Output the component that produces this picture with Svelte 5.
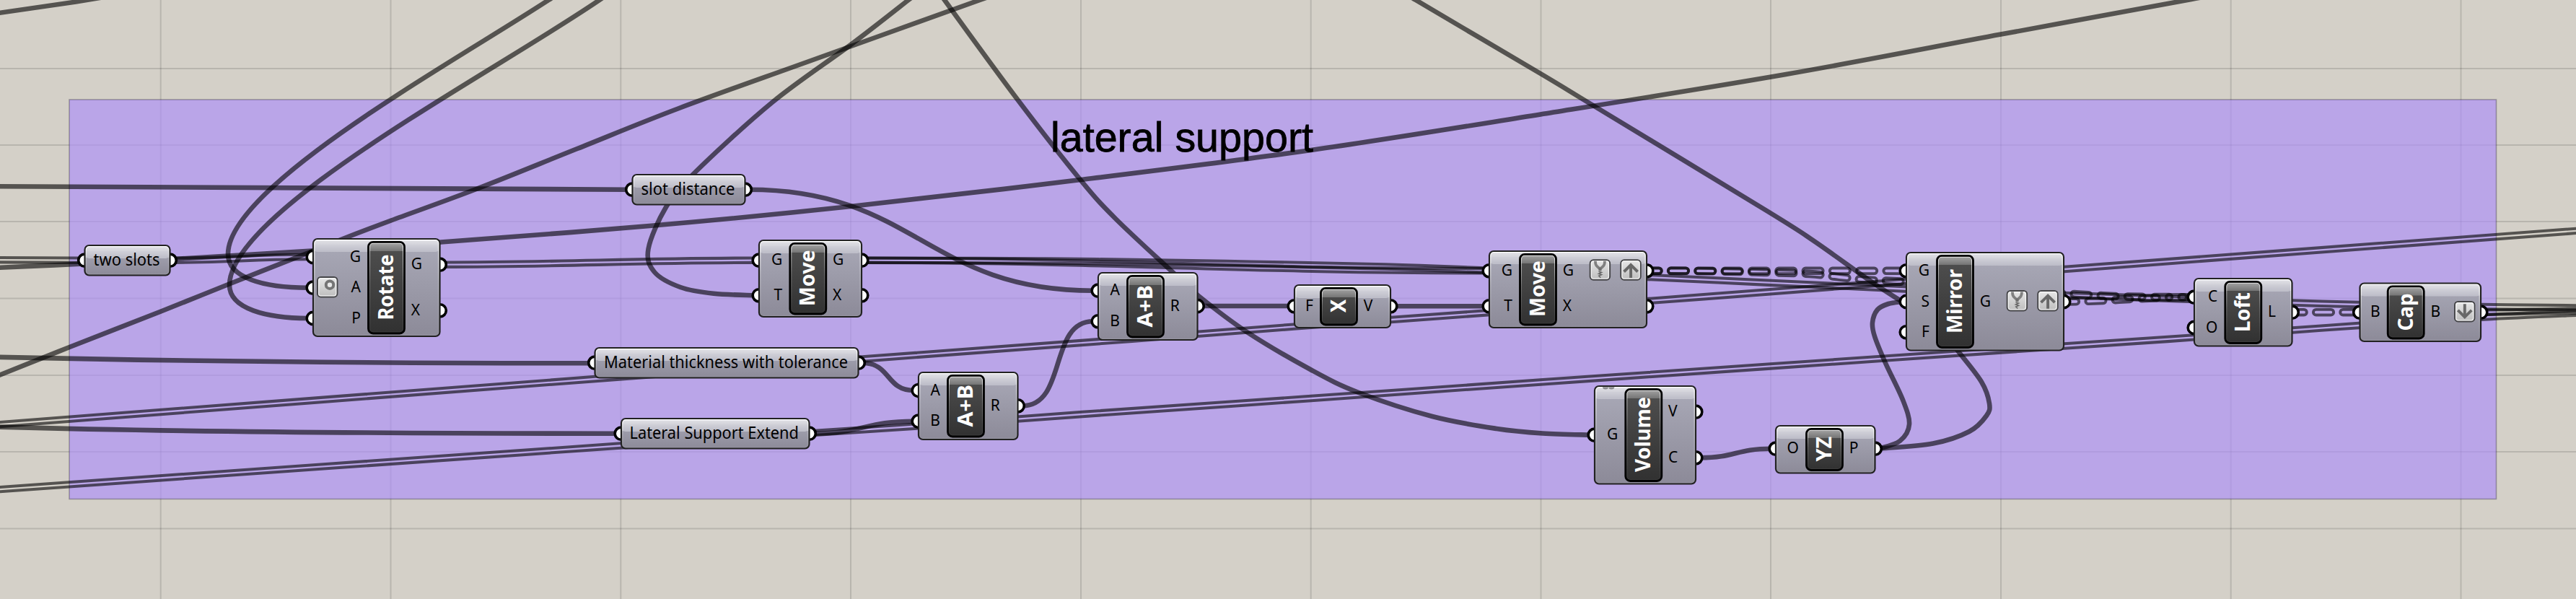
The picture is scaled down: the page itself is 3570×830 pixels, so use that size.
<script>
  const gridX = [222.7, 541.5, 860.3, 1179, 1498, 1816.7, 2135.5, 2454, 2773, 3091.7, 3410.5];
  const gridY = [95, 201, 307, 413.5, 520, 626, 732.5];

  // Smooth curve through a list of points (Catmull-Rom to cubic Bezier).
  function through(...p) {
    let d = `M${p[0][0]} ${p[0][1]}`;
    for (let i = 0; i < p.length - 1; i++) {
      const a = p[i - 1] ?? p[i], b = p[i], c = p[i + 1], e = p[i + 2] ?? c;
      d += `C${b[0] + (c[0] - a[0]) / 6} ${b[1] + (c[1] - a[1]) / 6} ${c[0] - (e[0] - b[0]) / 6} ${c[1] - (e[1] - b[1]) / 6} ${c[0]} ${c[1]}`;
    }
    return d;
  }
  // Wire leaving and arriving horizontally.
  const link = (x1, y1, x2, y2, k) => `M${x1} ${y1}C${x1 + k} ${y1} ${x2 - k} ${y2} ${x2} ${y2}`;

  const single = [
    'M-5 18.5L105 2.6L150 -5',
    'M-5 258.2C300 262 600 262.7 870 262.7',
    'M-5 494.8C250 500.5 560 503.3 820 503.3',
    'M-5 591.5C250 598.5 560 600.7 855 600.7',
    through([-5, 371], [116, 365.5], [250, 358.5], [432, 347.5], [611, 335.5], [900, 313], [1179, 286], [1498, 249], [1817, 208], [2135, 158.5], [2475, 103], [2773, 47.6], [3037, -1], [3080, -10]),
    through([-10, 524], [0, 519.5], [95, 481.5], [223, 431.5], [319, 393], [428, 350], [475, 331], [542, 305.5], [660, 262], [800, 206], [941, 150], [1121, 85], [1358, 0], [1400, -15]),
    'M768 -5C640 80 316 256 316 352C316 385 365 398.7 427 398.7',
    'M838 -5C700 92 318 290 318 395C318 428 370 441 427 441',
    through([1280, -17], [1259, 0], [1179, 62], [1070, 142], [961, 241], [923, 287], [898.5, 345], [907, 377], [943, 398], [989, 406.8], [1046, 409.3]),
    link(1038, 262.7, 1515, 402.7, 230),
    link(1196, 503, 1266, 541, 38),
    link(1128, 600.6, 1266, 583.7, 65),
    link(1417, 562.3, 1515, 445.3, 62),
    'M1665 424H1787',
    'M1933 424.3H2057',
    through([1296, -20], [1309, 0], [1411, 139], [1498, 250], [1546, 303], [1625, 377], [1661, 410], [1728, 460], [1817, 512.5], [1883, 544], [1985, 577], [2074, 594], [2138, 600.5], [2204, 602.7]),
    link(2356, 634.3, 2455, 621.7, 50),
    through([1940, -15], [1962, 0], [2135, 102], [2211, 148], [2450, 293], [2514, 334], [2593, 390], [2636, 418]),
    through([2604, 621.7], [2633, 611], [2646, 588], [2637, 554], [2613, 503], [2598, 466], [2595, 447], [2602, 429], [2617, 421], [2636, 418]),
    through([2604, 621.7], [2679, 614.5], [2729, 598], [2753, 576], [2757, 559], [2746, 529], [2714, 487], [2700, 470])
  ];

  const lists = [
    'M-5 360.2L110 360.7',
    link(240, 360.7, 428, 356, 90),
    link(614, 366.7, 1046, 360.7, 150),
    link(1198, 360.7, 2058, 375.3, 330),
    through([1196, 360.7], [1450, 361.5], [1700, 365], [1920, 369.5], [2058, 374.5], [2283, 384], [2450, 391.7], [2640, 400.5], [2861, 409], [3040, 415], [3177, 419.5], [3269, 422], [3439, 425], [3575, 426.5]),
    through([-5, 588.5], [825, 525], [1202, 497], [1522, 473.3], [1793, 452.6], [1928, 443], [2284, 417], [2450, 404.5], [2861, 373], [3575, 319.5]),
    through([-5, 678.5], [860, 617.5], [1271, 590.5], [1500, 574], [1817, 552], [2135, 529.5], [2450, 507.7], [2861, 479.5], [3041, 467.4], [3177, 457.5], [3269, 451], [3443, 439.5], [3575, 433.5]),
    link(3442, 432.7, 3575, 430.5, 50)
  ];

  const trees = [
    'M2278.5 375.3H2636',
    through([2278.5, 375.3], [2340, 375.3], [2430, 377], [2508, 379.5], [2549, 384], [2590, 388], [2640, 390.5], [2760, 400], [2861, 406.5], [2882, 408], [2930, 410.5], [2980, 411.5], [3036, 411.7]),
    'M2856.8 418C2920 418 2970 411.7 3036 411.7',
    'M3172.5 432.7H3264'
  ];

  const params = [
    { x: 116.5, y: 339, w: 120, text: 'two slots', tx: 129.5, tw: 92 },
    { x: 875.5, y: 241, w: 158, text: 'slot distance', tx: 888.5, tw: 130 },
    { x: 823.5, y: 481, w: 367, text: 'Material thickness with tolerance', tx: 837, tw: 338 },
    { x: 860, y: 579, w: 262.5, text: 'Lateral Support Extend', tx: 872.5, tw: 234.5 }
  ];

  const nodes = [
    { x: 433, y: 330, w: 177.5, h: 137, lx: 509, name: 'Rotate', t0: 443.5, tw: 91, ins: [['G', 356], ['A', 398.7], ['P', 441]], outs: [['G', 366.7], ['X', 430.3]], icons: [['dial', 439, 383]] },
    { x: 1051, y: 332, w: 144, h: 108, lx: 1093.3, name: 'Move', t0: 424.3, tw: 78, ins: [['G', 360.7], ['T', 409.3]], outs: [['G', 360.7], ['X', 409.3]] },
    { x: 1521, y: 377, w: 139.5, h: 95, lx: 1561, name: 'A+B', t0: 453.5, tw: 58.5, ins: [['A', 402.7], ['B', 445.3]], outs: [['R', 424]] },
    { x: 1272, y: 515, w: 139.5, h: 95, lx: 1312, name: 'A+B', t0: 591.5, tw: 58.5, ins: [['A', 541], ['B', 583.7]], outs: [['R', 562.3]] },
    { x: 1793, y: 394, w: 135, h: 61, lx: 1829, name: 'X', t0: 433, tw: 18, ins: [['F', 424.3]], outs: [['V', 424.3]] },
    { x: 2063, y: 347, w: 220, h: 108, lx: 2105, name: 'Move', t0: 439, tw: 78, ins: [['G', 375.3], ['T', 424.3]], outs: [['G', 375.3], ['X', 424.3]], icons: [['simplify', 2202.7, 359.3], ['up', 2245.3, 359.3]] },
    { x: 2209, y: 534, w: 142, h: 137.5, lx: 2251.3, name: 'Volume', t0: 654, tw: 104, ins: [['G', 602.7]], outs: [['V', 570.7], ['C', 634.3]] },
    { x: 2460, y: 589, w: 139.5, h: 67.5, lx: 2502, name: 'YZ', t0: 639.5, tw: 34.5, ins: [['O', 621.7]], outs: [['P', 621.7]] },
    { x: 2641, y: 349, w: 220, h: 137.5, lx: 2683, name: 'Mirror', t0: 462, tw: 89, ins: [['G', 375.3], ['S', 418], ['F', 460.3]], outs: [['G', 418]], icons: [['simplify', 2780.7, 402], ['up', 2823.3, 402]] },
    { x: 3040, y: 385, w: 137.5, h: 95.5, lx: 3082.3, name: 'Loft', t0: 460, tw: 55, ins: [['C', 411.7], ['O', 454]], outs: [['L', 432.7]] },
    { x: 3269.5, y: 391.5, w: 169.5, h: 82.5, lx: 3307.7, name: 'Cap', t0: 458.5, tw: 52, ins: [['B', 432.7]], outs: [['B', 432.7]], icons: [['down', 3401, 417]] }
  ];
</script>

{#snippet port(x, y)}
  <circle class="port" cx={x} cy={y} r="8.6" />
{/snippet}

{#snippet body(x, y, w, h)}
  <rect x={x + 1} y={y + 1} width={w - 2} height={h - 2} rx="6" fill="url(#body)" />
  <rect x={x + 1} y={y + 1} width={w - 2} height="18" rx="6" fill="url(#gloss)" />
  <rect x={x + 1} y={y + 9} width={w - 2} height="9" fill="url(#gloss2)" />
  <rect x={x + 2.6} y={y + 2.6} width={w - 5.2} height={h - 5.2} rx="4.5" fill="none" stroke="url(#rim)" stroke-width="1.5" />
  <rect class="outline" x={x + 1} y={y + 1} width={w - 2} height={h - 2} rx="6" />
{/snippet}

<main>
  <svg width="3570" height="830" viewBox="0 0 3570 830">
    <defs>
      <linearGradient id="body" x1="0" y1="0" x2="0" y2="1">
        <stop offset="0" stop-color="#aaaab8" />
        <stop offset="1" stop-color="#8c8a98" />
      </linearGradient>
      <linearGradient id="gloss" x1="0" y1="0" x2="0" y2="1">
        <stop offset="0" stop-color="#e4e4e8" />
        <stop offset="1" stop-color="#bebec9" />
      </linearGradient>
      <linearGradient id="gloss2" x1="0" y1="0" x2="0" y2="1">
        <stop offset="0" stop-color="#d0d0d8" />
        <stop offset="1" stop-color="#bebec9" />
      </linearGradient>
      <linearGradient id="rim" x1="0" y1="0" x2="0" y2="1">
        <stop offset="0" stop-color="#fff" />
        <stop offset="0.45" stop-color="#fff" stop-opacity="0.35" />
        <stop offset="1" stop-color="#fff" stop-opacity="0.06" />
      </linearGradient>
      <linearGradient id="plate" x1="0" y1="0" x2="0" y2="1">
        <stop offset="0" stop-color="#505050" />
        <stop offset="1" stop-color="#313131" />
      </linearGradient>
      <linearGradient id="shine" x1="0" y1="0" x2="0" y2="1">
        <stop offset="0" stop-color="#a8a8a8" />
        <stop offset="1" stop-color="#757575" />
      </linearGradient>
      <linearGradient id="key" x1="0" y1="0" x2="0" y2="1">
        <stop offset="0" stop-color="#e8e8e8" />
        <stop offset="1" stop-color="#bdbdbd" />
      </linearGradient>
      {#each lists as d, i}
        <mask id="list{i}" maskUnits="userSpaceOnUse" x="0" y="0" width="3570" height="830">
          <path {d} fill="none" stroke="#fff" stroke-width="10.4" />
          <path {d} fill="none" stroke="#000" stroke-width="2.3" />
        </mask>
      {/each}
      {#each trees as d, i}
        <mask id="tree{i}" maskUnits="userSpaceOnUse" x="0" y="0" width="3570" height="830">
          <path class="dash" {d} stroke="#fff" stroke-width="11.6" />
          <path class="dash" {d} stroke="#000" stroke-width="3.8" />
        </mask>
      {/each}
    </defs>

    <rect width="3570" height="830" fill="#d4d0c8" />
    <g stroke="#000" stroke-opacity="0.13" stroke-width="2">
      {#each gridX as x}<path d="M{x} 0V830" />{/each}
      {#each gridY as y}<path d="M0 {y}H3570" />{/each}
    </g>
    <rect x="96" y="138" width="3363.5" height="553.5" fill="rgb(173,143,248)" fill-opacity="0.67" stroke="#000" stroke-opacity="0.27" stroke-width="1.6" />
    <text class="title" x="1456" y="209.5" textLength="364" lengthAdjust="spacingAndGlyphs">lateral support</text>

    <g class="wires">
      {#each single as d}<path {d} />{/each}
    </g>
    {#each lists as _, i}
      <rect class="fill" width="3570" height="830" mask="url(#list{i})" />
    {/each}
    {#each trees as _, i}
      <rect class="fill" width="3570" height="830" mask="url(#tree{i})" />
    {/each}

    {#each params as p}
      {@render port(p.x + 0.8, p.y + 21.7)}
      {@render port(p.x + p.w - 0.8, p.y + 21.7)}
      {@render body(p.x, p.y, p.w, 43.5)}
      <text class="param" x={p.tx} y={p.y + 28.5} textLength={p.tw} lengthAdjust="spacingAndGlyphs">{p.text}</text>
    {/each}

    {#each nodes as n}
      {#each n.ins as [, y]}{@render port(n.x + 0.8, y)}{/each}
      {#each n.outs as [, y]}{@render port(n.x + n.w - 0.8, y)}{/each}
      {@render body(n.x, n.y, n.w, n.h)}
      {#each n.ins as [t, y]}<text class="pin end" x={n.lx - 9} y={y + 6.6}>{t}</text>{/each}
      {#each n.outs as [t, y]}<text class="pin" x={n.lx + 60.8} y={y + 6.6}>{t}</text>{/each}

      <rect x={n.lx + 1.5} y={n.y + 5.3} width="50" height={n.h - 10.3} rx="6.5" fill="url(#plate)" />
      <path d="M{n.lx + 1.5} {n.y + 18}v-6.2a6.5 6.5 0 0 1 6.5 -6.5h37a6.5 6.5 0 0 1 6.5 6.5v6.2z" fill="url(#shine)" />
      <rect x={n.lx + 3.4} y={n.y + 7.2} width="46.2" height={n.h - 14.1} rx="4.5" fill="none" stroke="url(#rim)" stroke-width="1.2" stroke-opacity="0.75" />
      <rect x={n.lx + 1.5} y={n.y + 5.3} width="50" height={n.h - 10.3} rx="6.5" fill="none" stroke="#000" stroke-width="2.8" />
      <text class="name" transform="translate({n.lx + 35.8} {n.t0}) rotate(-90)" textLength={n.tw} lengthAdjust="spacingAndGlyphs">{n.name}</text>

      {#each n.icons ?? [] as [kind, x, y]}
        <g transform="translate({x} {y})">
          <rect x="1" y="1" width="27.4" height="27.4" rx="4.5" fill="url(#key)" stroke="#454548" stroke-width="2" />
          <rect x="2.6" y="2.6" width="24.2" height="24.2" rx="3" fill="none" stroke="#fff" stroke-opacity="0.75" stroke-width="1.3" />
          {#if kind === 'dial'}
            <circle cx="18" cy="11.7" r="5.2" fill="#e8e8e8" stroke="#757575" stroke-width="4" />
          {:else if kind === 'up'}
            <path class="glyph" d="M14.8 25.7V8M5.3 17.2L14.8 7.7L24.3 17.2" />
          {:else if kind === 'down'}
            <path class="glyph" d="M14.8 4.3V22M5.3 12.8L14.8 22.3L24.3 12.8" />
          {:else}
            <path d="M8.2 2.5C8.2 8 9.5 9.3 14.8 13.5C20 9.3 21.3 8 21.3 2.5" fill="none" stroke="#808080" stroke-width="3.8" />
            <path d="M14.8 11.5V16" stroke="#707070" stroke-width="4" />
            <path d="M12.8 17L16.8 18.2L12.8 20L16.8 21.3L13 23L15.6 25.5" fill="none" stroke="#666" stroke-width="1.5" />
          {/if}
        </g>
      {/each}
    {/each}

    <path d="M2221 536.3h8a4 3.2 0 0 1-8 0zM2229.3 536.3h8a4 3.2 0 0 1-8 0z" fill="#8c8c90" />
  </svg>
</main>

<style>
  :global(body) {
    margin: 0;
    background: #d4d0c8;
  }
  main {
    width: 3570px;
    height: 830px;
    overflow: hidden;
  }
  svg {
    display: block;
  }
  text {
    font-family: "Noto Sans", "Open Sans", sans-serif;
    fill: #000;
  }
  .title {
    font-family: "Liberation Sans", Arial, sans-serif;
    font-size: 56.5px;
    stroke: #000;
    stroke-width: 0.8px;
  }
  .param {
    font-size: 23.5px;
  }
  .pin {
    font-size: 21px;
  }
  .end {
    text-anchor: end;
  }
  .name {
    font-size: 28px;
    font-weight: 700;
    fill: #fff;
  }
  .wires path {
    fill: none;
    stroke: #000;
    stroke-opacity: 0.6;
    stroke-width: 6.6;
  }
  .fill {
    fill: #000;
    fill-opacity: 0.6;
  }
  .dash {
    fill: none;
    stroke-linecap: round;
    stroke-dasharray: 20.5 16.8;
  }
  .port {
    fill: #fff;
    stroke: #000;
    stroke-width: 3.6;
  }
  .outline {
    fill: none;
    stroke: #222;
    stroke-width: 2.2;
  }
  .glyph {
    fill: none;
    stroke: #686868;
    stroke-width: 3.9;
  }
</style>
